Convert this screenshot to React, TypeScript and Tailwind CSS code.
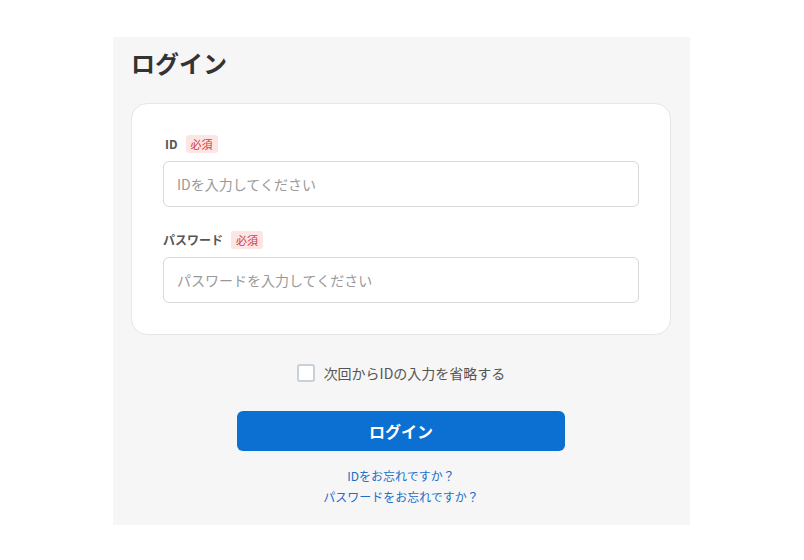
export default function App() {
  return (
    <div className="min-h-[560px] bg-white pt-[37px]" style={{ fontFamily: '"Noto Sans CJK JP", "Noto Sans", sans-serif' }}>
      <div className="ml-[113px] w-[577px] bg-[#f6f6f6] pl-[18px] pr-[19px] pt-[8px] pb-[19px]">
        <h1 className="text-[24px] leading-[36px] font-bold text-[#333]">ログイン</h1>

        {/* Form card */}
        <div className="mt-[22px] rounded-2xl border border-[#e6e6e6] bg-white px-[31px] py-[31px]">
          <div className="flex items-center gap-[8px] pl-[2px]">
            <span className="text-[12px] leading-[18px] font-bold text-[#555]">ID</span>
            <span className="rounded-[3px] bg-[#fbe5e5] px-[5px] text-[11px] leading-[18px] text-[#d23a3a]">必須</span>
          </div>
          <input
            className="mt-[8px] block h-[46px] w-full rounded-md border border-[#d9d9d9] bg-white px-[13px] text-[14px] text-[#333] outline-none placeholder:text-[#999]"
            placeholder="IDを入力してください"
          />

          <div className="mt-[24px] flex items-center gap-[8px]">
            <span className="text-[12px] leading-[18px] font-bold text-[#555]">パスワード</span>
            <span className="rounded-[3px] bg-[#fbe5e5] px-[5px] text-[11px] leading-[18px] text-[#d23a3a]">必須</span>
          </div>
          <input
            type="password"
            className="mt-[8px] block h-[46px] w-full rounded-md border border-[#d9d9d9] bg-white px-[13px] text-[14px] text-[#333] outline-none placeholder:text-[#999]"
            placeholder="パスワードを入力してください"
          />
        </div>

        <label className="mt-[28px] flex items-center justify-center gap-[9px]">
          <span className="h-[18px] w-[18px] rounded-[3px] border-2 border-[#c9d0d8] bg-white" />
          <span className="text-[14px] leading-[20px] text-[#555]">次回からIDの入力を省略する</span>
        </label>

        <div className="mt-[28px] flex justify-center">
          <button className="h-[40px] w-[328px] rounded-md bg-[#0b70d1] text-[16px] font-bold text-white">ログイン</button>
        </div>

        <div className="mt-[16px] flex flex-col items-center gap-[3px] text-[12px] leading-[18px] text-[#1a6fc9]">
          <a>IDをお忘れですか？</a>
          <a>パスワードをお忘れですか？</a>
        </div>
      </div>
    </div>
  )
}
